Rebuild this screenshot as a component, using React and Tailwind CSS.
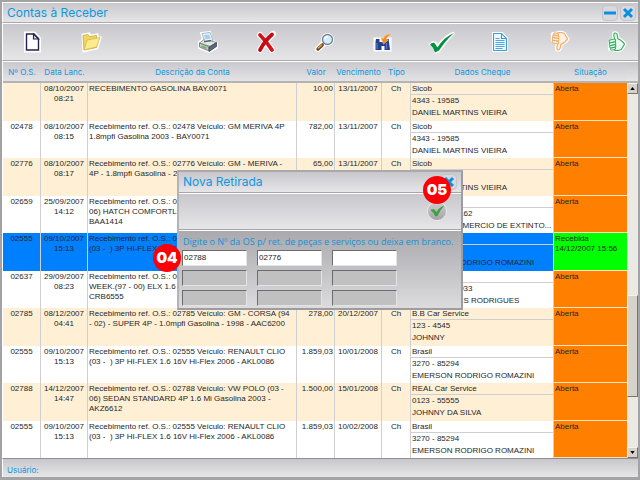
import { useState } from 'react';

const BAR = 'bg-gradient-to-b from-[#c8c8cc] to-[#e6e6e9]';

const COLUMNS = [
  { label: 'Nº O.S.', width: 'w-[38px]' },
  { label: 'Data Lanc.', width: 'w-[47px]' },
  { label: 'Descrição da Conta', width: '' },
  { label: 'Valor', width: 'w-[38px]' },
  { label: 'Vencimento', width: 'w-[47px]' },
  { label: 'Tipo', width: 'w-[29px]' },
  { label: 'Dados Cheque', width: 'w-[143px]' },
  { label: 'Situação', width: 'w-[73px]' },
];

const CONTAS = [
  { os: '', data: '08/10/2007', hora: '08:21', desc: 'RECEBIMENTO GASOLINA BAY.0071', valor: '10,00', venc: '13/11/2007', banco: 'Sicob', conta: '4343 - 19585', nome: 'DANIEL MARTINS VIEIRA' },
  { os: '02478', data: '08/10/2007', hora: '08:15', desc: 'Recebimento ref. O.S.: 02478 Veículo: GM MERIVA 4P\n1.8mpfi Gasolina 2003 - BAY0071', valor: '782,00', venc: '13/11/2007', banco: 'Sicob', conta: '4343 - 19585', nome: 'DANIEL MARTINS VIEIRA' },
  { os: '02776', data: '08/10/2007', hora: '08:17', desc: 'Recebimento ref. O.S.: 02776 Veículo: GM - MERIVA -\n4P - 1.8mpfi Gasolina - 2003', valor: '65,00', venc: '13/11/2007', banco: 'Sicob', conta: '4343 - 19585', nome: 'DANIEL MARTINS VIEIRA' },
  { os: '02659', data: '25/09/2007', hora: '14:12', desc: 'Recebimento ref. O.S.: 02659 Veículo: FORD (03 -\n06) HATCH COMFORTLINE 1.6\nBAA1414', valor: '120,00', venc: '25/11/2007', banco: 'Brasil', conta: '10312 - 4407162', nome: 'ANTONIO COMERCIO DE EXTINTO...' },
  { os: '02555', data: '09/10/2007', hora: '15:13', desc: 'Recebimento ref. O.S.: 02555 Veículo: RENAULT CLIO\n(03 -  ) 3P HI-FLEX 1.6 16V Hi-Flex 2006', valor: '1.859,03', venc: '10/12/2007', banco: 'Brasil', conta: '3270 - 85294', nome: 'EMERSON RODRIGO ROMAZINI', recebida: '14/12/2007 15:56' },
  { os: '02637', data: '29/09/2007', hora: '08:23', desc: 'Recebimento ref. O.S.: 02637 Veículo: PALIO\nWEEK.(97 - 00) ELX 1.6 16V\nCRB6555', valor: '340,00', venc: '15/12/2007', banco: 'Brasil', conta: '10245 - 6180933', nome: 'MARCO ALVES RODRIGUES' },
  { os: '02785', data: '08/12/2007', hora: '04:41', desc: 'Recebimento ref. O.S.: 02785 Veículo: GM - CORSA (94\n- 02) - SUPER 4P - 1.0mpfi Gasolina - 1998 - AAC6200', valor: '278,00', venc: '20/12/2007', banco: 'B.B Car Service', conta: '123 - 4545', nome: 'JOHNNY' },
  { os: '02555', data: '09/10/2007', hora: '15:13', desc: 'Recebimento ref. O.S.: 02555 Veículo: RENAULT CLIO\n(03 -  ) 3P HI-FLEX 1.6 16V Hi-Flex 2006 - AKL0086', valor: '1.859,03', venc: '10/01/2008', banco: 'Brasil', conta: '3270 - 85294', nome: 'EMERSON RODRIGO ROMAZINI' },
  { os: '02788', data: '14/12/2007', hora: '14:47', desc: 'Recebimento ref. O.S.: 02788 Veículo: VW POLO (03 -\n06) SEDAN STANDARD 4P 1.6 Mi Gasolina 2003 -\nAKZ6612', valor: '1.500,00', venc: '15/01/2008', banco: 'REAL Car Service', conta: '0123 - 55555', nome: 'JOHNNY DA SILVA' },
  { os: '02555', data: '09/10/2007', hora: '15:13', desc: 'Recebimento ref. O.S.: 02555 Veículo: RENAULT CLIO\n(03 -  ) 3P HI-FLEX 1.6 16V Hi-Flex 2006 - AKL0086', valor: '1.859,03', venc: '10/02/2008', banco: 'Brasil', conta: '3270 - 85294', nome: 'EMERSON RODRIGO ROMAZINI' },
];

function Thumb({ stroke, fill }) {
  const palm = 'M8 2.500Q11 1.500 11.500 5L12 8.500Q16 9.500 19.500 14.500L16 20.500Q12 22.500 8 21L5 11.500 8.500 9Q7 5 8 2.500z';
  return (
    <>
      <path d={palm} fill="#fff" stroke="#fff" strokeWidth="4" />
      <path d="M4 12.500v7" stroke="#fff" strokeWidth="6" strokeLinecap="round" />
      <path d={palm} fill={fill} stroke={stroke} strokeWidth="1.200" />
      <g fill={fill} stroke={stroke} strokeWidth="1.100" transform="rotate(-12 6 15)">
        <rect x="3" y="9.500" width="7.500" height="3.200" rx="1.600" />
        <rect x="2.500" y="12.700" width="7.500" height="3" rx="1.500" />
        <rect x="2.500" y="15.700" width="7" height="2.800" rx="1.400" />
        <rect x="3" y="18.500" width="5.500" height="2.500" rx="1.250" />
      </g>
    </>
  );
}

const TOOLS = [
  {
    label: 'Novo',
    icon: (
      <>
        <path d="M6 3.500h8l5 5v12H6z" fill="#fff" stroke="#fff" strokeWidth="4" />
        <path d="M6.500 4h7.500l4.500 4.500v11.500h-12z" fill="#fdfdff" stroke="#23254a" strokeWidth="1.400" />
        <path d="M13.500 4v5h5z" fill="#dfe0ee" stroke="#23254a" strokeWidth="1.200" />
      </>
    ),
  },
  {
    label: 'Abrir',
    icon: (
      <>
        <path d="M4 5l6-1 1 2 7-1v3l3 0-3 10-13 3z" fill="#fff" stroke="#fff" strokeWidth="3" />
        <path d="M4 5.500l5-1 1.500 2 7-1v12L5 20z" fill="#f3d662" stroke="#d0a63c" strokeWidth=".8" />
        <path d="M8 10l13-2.500-3.500 9.500L5 20z" fill="#fbea8e" stroke="#d8b24a" strokeWidth=".8" />
      </>
    ),
  },
  null,
  {
    label: 'Imprimir',
    icon: (
      <>
        <path d="M5 3l9-1 2 8 5 3v5l-8 4-10-4v-6l4-3z" fill="#fff" stroke="#fff" strokeWidth="2" />
        <path d="M3.500 13l5-4 12 3.500-6 4z" fill="#e3e8e3" stroke="#76817d" strokeWidth=".8" />
        <path d="M3.500 13v4l9.500 4v-4z" fill="#c3ccc8" stroke="#66706e" strokeWidth=".8" />
        <path d="M13 17l7.500-4.500v4L13 21.500z" fill="#59677a" stroke="#3c4759" strokeWidth=".8" />
        <path d="M6 3.500l8-1 3 8-8 1z" fill="#eef7ff" stroke="#8ea6ba" strokeWidth=".8" />
        <path d="M8 5l5-.6 1.600 4.200-5 .8z" fill="#a4cdee" />
        <path d="M8 11.700l7-1.200" stroke="#5c6664" strokeWidth="1.400" />
        <path d="M5.500 16.200l5 2" stroke="#6fae65" strokeWidth="1.500" />
      </>
    ),
  },
  {
    label: 'Excluir',
    icon: (
      <>
        <path d="M6 5q6 6 12 15M19 4q-7 6-13 16" fill="none" stroke="#fff" strokeWidth="6" strokeLinecap="round" />
        <path d="M6 5q6 6 12 15" fill="none" stroke="#d3121a" strokeWidth="3.800" strokeLinecap="round" />
        <path d="M18 4.500q-7 6-12 15.500" fill="none" stroke="#c20d15" strokeWidth="3.800" strokeLinecap="round" />
      </>
    ),
  },
  {
    label: 'Pesquisar',
    icon: (
      <>
        <path d="M5 19l6-6" stroke="#fff" strokeWidth="6" strokeLinecap="round" />
        <circle cx="14.500" cy="9.500" r="6.500" fill="#fff" />
        <path d="M10.500 13.500l-2.500 2.500" stroke="#6b5b56" strokeWidth="2" />
        <path d="M5 19l4-3.700" stroke="#6a4520" strokeWidth="3.400" strokeLinecap="round" />
        <path d="M5.300 18l3.200-3" stroke="#e7a33c" strokeWidth="1.600" strokeLinecap="round" />
        <circle cx="14.500" cy="9.500" r="5" fill="#d5ecfb" stroke="#71828f" strokeWidth="1.300" />
        <path d="M11.500 9q1-2.500 3.500-2.500" fill="none" stroke="#fff" strokeWidth="1.500" />
      </>
    ),
  },
  {
    label: 'Localizar',
    icon: (
      <>
        <path d="M4 9h5v3h5V9h5v11h-6v-4h-3v4H4z" fill="#fff" stroke="#fff" strokeWidth="3" />
        <path d="M5 9h3.500v3h6V9H18v3l1 8h-5.500v-4h-3v4H4.500V12z" fill="#24418e" />
        <path d="M6 13v6M15.500 13v6" stroke="#5a7bc7" strokeWidth="1.200" />
        <path d="M20 4q-6 0-7.500 4.500L10 8l2.500 6 5-4-2.400-.6Q16 6.500 20 4z" fill="#f58b1f" stroke="#fbc188" strokeWidth=".6" />
      </>
    ),
  },
  {
    label: 'Confirmar',
    icon: (
      <>
        <path d="M1 14q2-2 4-1l3 4Q14 7 24 3q-9 8-15 18l-3 1q-1-5-5-8z" fill="#fff" stroke="#fff" strokeWidth="3" />
        <path d="M0 14.500q2-2.500 4.500-1.500l3 4.500Q14 7 24 3q-8 7-15 17.500l-4 2Q4 18 0 14.500z" fill="#00923f" />
      </>
    ),
  },
  {
    label: 'Relatório',
    icon: (
      <>
        <path d="M5 3h9l5 5v13H5z" fill="#fff" stroke="#fff" strokeWidth="2" />
        <path d="M5.500 3.500h8l5 5v12h-13zM13.500 3.500v5h5" fill="#eef7fd" stroke="#3a9fdb" strokeWidth="1.100" />
        <path d="M7.500 8.500h4M7.500 10.500h9M7.500 12.500h9M7.500 14.500h9M7.500 16.500h9M7.500 18.500h7" stroke="#4ba9df" />
      </>
    ),
  },
  {
    label: 'Reprovar',
    icon: (
      <g transform="translate(3 22) scale(.9 -.9)">
        <Thumb stroke="#f3a45b" fill="#fff1e2" />
      </g>
    ),
  },
  {
    label: 'Aprovar',
    icon: (
      <g transform="translate(2 1) scale(.9)">
        <Thumb stroke="#1fae54" fill="#effbf2" />
      </g>
    ),
  },
];

function WindowButton({ label, onClick, children }) {
  return (
    <button
      type="button"
      aria-label={label}
      onClick={onClick}
      className="flex h-4 w-4 items-center justify-center rounded-sm border border-[#c3c3c8] bg-[#d9d9dd]"
    >
      <svg viewBox="0 0 12 12" className="h-3 w-3" fill="none" stroke="#0a8fe0" strokeWidth="3">
        {children}
      </svg>
    </button>
  );
}

function Badge({ className, children }) {
  return (
    <span
      className={`absolute flex h-7 w-7 items-center justify-center rounded-full bg-[#fb0007] font-[Inter,sans-serif] text-[15px] font-black leading-none text-white ${className}`}
    >
      {children}
    </span>
  );
}

function ContaRow({ conta, index, selected, onSelect }) {
  let bg = index % 2 === 0 ? 'bg-[#fff0d5]' : 'bg-white';
  if (selected) bg = 'bg-[#0080ff]';

  return (
    <tr onClick={onSelect} className={`${bg} align-top`}>
      <td className="border-r border-[#cfcfcf] pt-px text-center">{conta.os}</td>
      <td className="border-r border-[#cfcfcf] pt-px text-center">
        {conta.data}
        <br />
        {conta.hora}
      </td>
      <td className="overflow-hidden whitespace-pre border-r border-[#cfcfcf] pl-px pt-px">{conta.desc}</td>
      <td className="border-r border-[#cfcfcf] pr-px pt-px text-right">{conta.valor}</td>
      <td className="border-r border-[#cfcfcf] pt-px text-center">{conta.venc}</td>
      <td className="border-r border-[#cfcfcf] pt-px text-center">Ch</td>
      <td className="overflow-hidden whitespace-nowrap border-r border-[#cfcfcf]">
        <div className="border-b border-[#cfcfcf] pl-px leading-[11px]">{conta.banco}</div>
        <div className="pl-px leading-3">{conta.conta}</div>
        <div className="pl-px leading-3">{conta.nome}</div>
      </td>
      <td className={`border-b border-[#ffe3bd] pl-px pt-px ${conta.recebida ? 'bg-[#00ff00]' : 'bg-[#ff8000]'}`}>
        {conta.recebida ? 'Recebida' : 'Aberta'}
        <br />
        {conta.recebida}
      </td>
    </tr>
  );
}

function ScrollBar() {
  const button = 'flex h-[11px] w-full shrink-0 items-center justify-center border border-[#f4f3ee] border-b-[#77756f] border-r-[#77756f] bg-[#d6d3cc]';
  return (
    <div className="flex min-h-0 flex-1 flex-col bg-[#ebe9e6]">
      <button type="button" aria-label="Rolar para cima" className={button}>
        <svg viewBox="0 0 6 4" className="h-[3px] w-[5px]"><path d="M3 0l3 4H0z" /></svg>
      </button>
      <div className="grow-[203]" />
      <div className="grow-[101] border border-[#f4f3ee] border-b-[#77756f] border-r-[#77756f] bg-[#d6d3cc]" />
      <div className="grow-[50]" />
      <button type="button" aria-label="Rolar para baixo" className={button}>
        <svg viewBox="0 0 6 4" className="h-[3px] w-[5px]"><path d="M0 0h6L3 4z" /></svg>
      </button>
    </div>
  );
}

function RetiradaDialog({ onClose }) {
  const [ordens, setOrdens] = useState(['02788', '02776', '', '', '', '', '', '', '']);

  function handleChange(i, value) {
    setOrdens((list) => list.map((v, n) => (n === i ? value : v)));
  }

  return (
    <div className="absolute inset-0 flex items-center justify-center">
      <form
        role="dialog"
        aria-label="Nova Retirada"
        onSubmit={(e) => { e.preventDefault(); onClose(); }}
        className="relative w-[286px] border-2 border-[#9d9da1] border-l-[#b4b4b8] border-t-[#a9a9ad]"
      >
        <div className={`flex h-[21px] items-center justify-between border-b border-[#a5a5a9] pl-1 pr-1 ${BAR}`}>
          <h2 className="text-xs text-[#0f97dd]">Nova Retirada</h2>
          <WindowButton label="Fechar" onClick={onClose}>
            <path d="M2 2l8 8M10 2l-8 8" />
          </WindowButton>
        </div>

        <div className={`flex h-[37px] items-center justify-end border-b border-t border-b-[#a5a5a9] border-t-white pr-[14px] ${BAR}`}>
          <button type="submit" aria-label="Confirmar retirada" className="flex h-5 w-5 items-center justify-center rounded-full border border-[#e9e9e9] bg-gradient-to-b from-[#cfcfd1] to-[#a3a3a6]">
            <svg viewBox="0 0 16 16" className="h-4 w-4">
              <path d="M2 7l3-.5 2.500 3Q10 5 14.500 3 10.500 7.500 8 13L6.500 13Q5 9.500 2 7z" fill="#3aa93c" stroke="#2c8a35" strokeWidth=".5" />
            </svg>
          </button>
        </div>

        <div className="border-t border-white bg-gradient-to-b from-[#a9a9ae] to-[#dcdcde] px-[3px] pb-0.5 pt-[3px]">
          <label htmlFor="os-0" className="block whitespace-nowrap pl-px font-['Open_Sans',sans-serif] text-[9px] leading-4 text-[#1691d6]">
            Digite o Nº da OS p/ ret. de peças e serviços ou deixa em branco.
          </label>
          <div className="flex w-[215px] flex-wrap gap-x-2.5 gap-y-1">
            {ordens.map((os, i) => (
              <input
                key={i}
                id={`os-${i}`}
                aria-label={i > 0 ? `Nº da OS ${i + 1}` : undefined}
                value={os}
                disabled={i > 2}
                onChange={(e) => handleChange(i, e.target.value)}
                className="h-4 w-[65px] rounded-none border border-b-[#e4e4e4] border-l-[#6c6c6c] border-r-[#e4e4e4] border-t-[#6c6c6c] bg-white px-px font-['Liberation_Sans',Arial,sans-serif] text-[8px] leading-3 text-[#222] outline-none disabled:bg-[#c0c0c0]"
              />
            ))}
          </div>
        </div>

        <Badge className="right-[10px] top-[4px]">05</Badge>
        <Badge className="-left-[26px] top-[72px]">04</Badge>
      </form>
    </div>
  );
}

export default function App() {
  const [dialogOpen, setDialogOpen] = useState(true);
  const [selected, setSelected] = useState(4);

  return (
    <div className="relative flex h-screen flex-col border-2 border-b-[3px] border-[#a3a3a6] bg-white font-[Inter,'Liberation_Sans',sans-serif]">
      {/* Title bar */}
      <header className={`flex h-[21px] shrink-0 items-center justify-between border-b border-l border-t border-b-[#a9a9ad] border-l-white border-t-white pl-1 pr-0.5 ${BAR}`}>
        <h1 className="text-xs text-[#0f97dd]">Contas à Receber</h1>
        <div className="flex gap-0.5">
          <WindowButton label="Minimizar"><path d="M0 6h12" /></WindowButton>
          <WindowButton label="Fechar janela"><path d="M2 2l8 8M10 2l-8 8" /></WindowButton>
        </div>
      </header>

      {/* Toolbar */}
      <nav className={`flex h-[38px] shrink-0 items-center justify-between border-b border-l border-t border-b-[#a9a9ad] border-l-white border-t-white pl-[17px] pr-[9px] ${BAR}`}>
        {TOOLS.map((tool, i) =>
          tool ? (
            <button
              key={i}
              type="button"
              aria-label={tool.label}
              onClick={tool.label === 'Novo' ? () => setDialogOpen(true) : undefined}
              className="h-6 w-6"
            >
              <svg viewBox="0 0 24 24" className="h-6 w-6 overflow-visible" fill="none">{tool.icon}</svg>
            </button>
          ) : (
            <span key={i} className="w-6" />
          )
        )}
      </nav>

      {/* Accounts */}
      <main className="flex min-h-0 flex-1 pl-px">
        <div className="min-w-0 flex-1">
          <table className="h-full w-full table-fixed border-separate border-spacing-0 font-['Liberation_Sans',Arial,sans-serif] text-[8px] leading-[10px] text-[#262626]">
            <thead>
              <tr className={`h-[22px] ${BAR}`}>
                {COLUMNS.map((col) => (
                  <th
                    key={col.label}
                    className={`h-[22px] whitespace-nowrap border-b-2 border-t border-b-[#b4b4b7] border-t-white p-0 text-center font-[Inter,sans-serif] text-[8px] font-normal text-[#0f97dd] ${col.width}`}
                  >
                    {col.label}
                  </th>
                ))}
              </tr>
            </thead>
            <tbody>
              {CONTAS.map((conta, i) => (
                <ContaRow key={i} conta={conta} index={i} selected={selected === i} onSelect={() => setSelected(i)} />
              ))}
            </tbody>
          </table>
        </div>
        <div className="flex w-[11px] shrink-0 flex-col">
          <div className={`h-[22px] shrink-0 border-b-2 border-t border-b-[#b4b4b7] border-t-white ${BAR}`} />
          <ScrollBar />
        </div>
      </main>

      <footer className={`flex h-[19px] shrink-0 items-center border-l border-t border-l-white border-t-[#8f8f93] pl-1 pt-1 text-[8px] leading-3 text-[#0f97dd] ${BAR}`}>
        Usuário:
      </footer>

      {dialogOpen && <RetiradaDialog onClose={() => setDialogOpen(false)} />}
    </div>
  );
}
